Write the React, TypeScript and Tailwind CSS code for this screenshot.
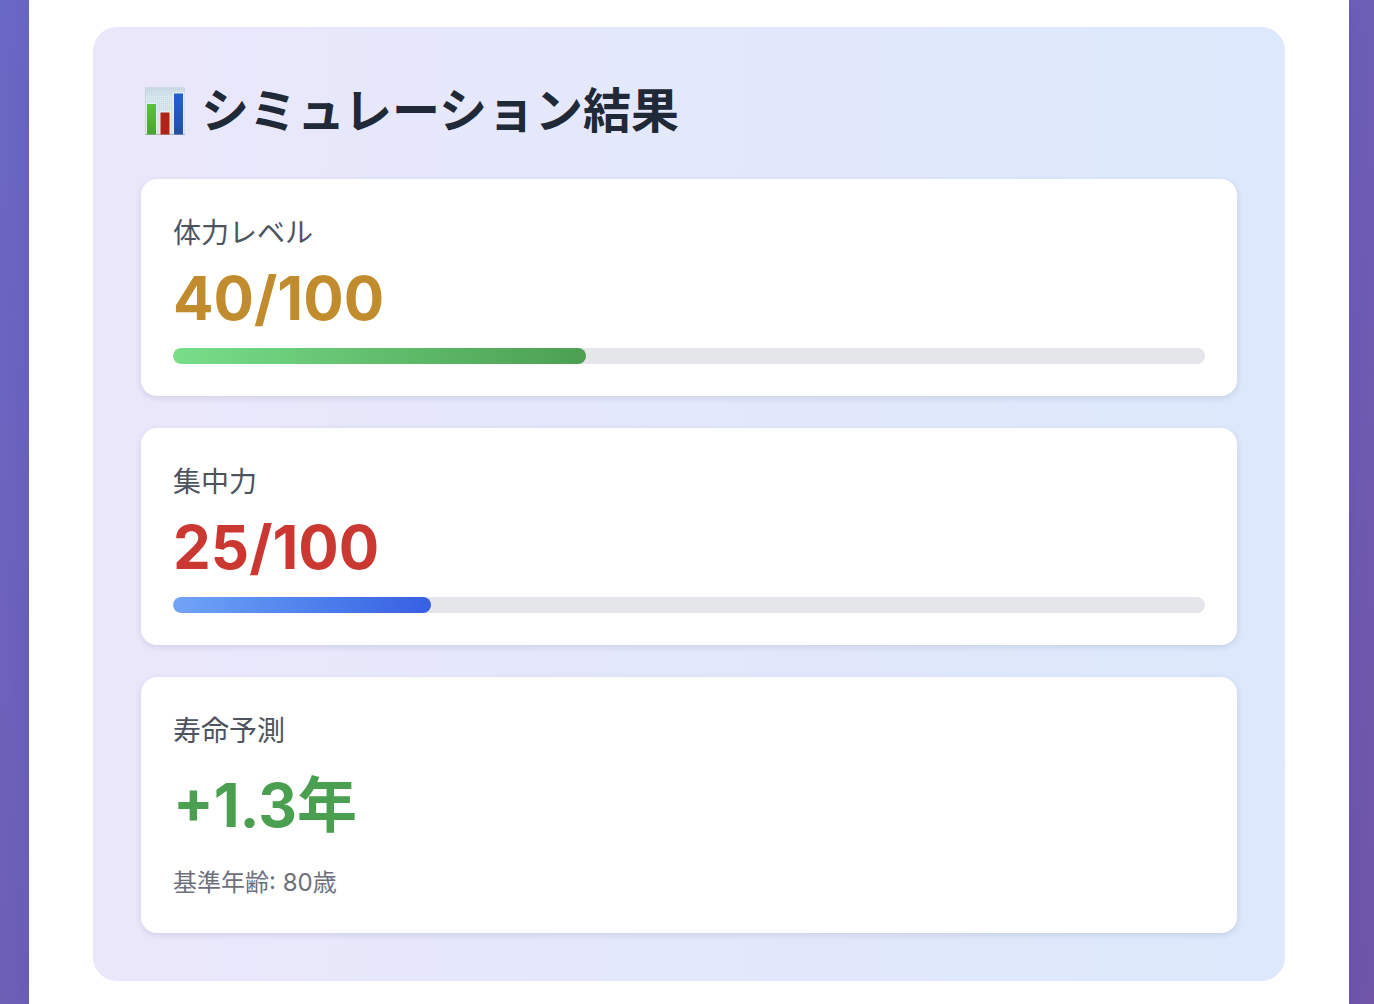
import React from "react";
import clsx from "clsx";

interface StatCardProps {
  label: string;
  value: string;
  valueClass: string;
  percent?: number;
  barClass?: string;
  note?: string;
}

const ChartIcon: React.FC = () => (
  <svg viewBox="0 0 48 48" className="w-12 h-12 shrink-0" aria-hidden="true">
    <defs>
      <linearGradient id="paper" x1="0" y1="0" x2="0" y2="1">
        <stop offset="0" stopColor="#d0dce5" />
        <stop offset="0.2" stopColor="#dfecf2" />
        <stop offset="1" stopColor="#e0eaf1" />
      </linearGradient>
      <linearGradient id="green" x1="0" y1="0" x2="0" y2="1">
        <stop offset="0" stopColor="#59c43b" />
        <stop offset="1" stopColor="#4ba42e" />
      </linearGradient>
      <linearGradient id="blue" x1="0" y1="0" x2="0" y2="1">
        <stop offset="0" stopColor="#2260d0" />
        <stop offset="1" stopColor="#214fa7" />
      </linearGradient>
      <pattern id="grid" width="2" height="2" patternUnits="userSpaceOnUse">
        <path d="M0 0.5H2M0.5 0V2" stroke="#b9d0da" strokeWidth="0.3" />
      </pattern>
    </defs>
    <rect x="4" y="0.5" width="40" height="47.5" fill="url(#paper)" />
    <rect x="4" y="0.5" width="40" height="47.5" fill="url(#grid)" />
    <path d="M4.5 48V1H43.5V48" fill="none" stroke="#c9d3dd" />
    <path d="M5 16H16V48H5ZM18.5 24H30V48H18.5ZM32 5H43.5V48H32Z" fill="#e4edf1" />
    <path d="M4 47.5H44" stroke="#aab7bd" />
    <rect x="6" y="17" width="9" height="30.5" fill="url(#green)" />
    <rect x="19.5" y="25.5" width="9" height="22" fill="#b02318" />
    <rect x="33" y="6.5" width="9" height="41" fill="url(#blue)" />
  </svg>
);

const StatCard: React.FC<StatCardProps> = ({
  label,
  value,
  valueClass,
  percent,
  barClass,
  note,
}) => {
  return (
    <div className="bg-white rounded-2xl p-8 shadow-[0_2px_6px_rgba(30,40,70,0.12)]">
      <div className="text-[28px] leading-[45px] text-[#4d535f] mb-1">{label}</div>
      <div className={clsx("text-[60px] font-bold", valueClass)}>{value}</div>
      {percent !== undefined && (
        <div
          role="progressbar"
          aria-label={label}
          aria-valuenow={percent}
          aria-valuemin={0}
          aria-valuemax={100}
          className="mt-3 h-4 rounded-full bg-[#e5e6ea] overflow-hidden"
        >
          <div
            className={clsx("h-full rounded-full", barClass)}
            style={{ width: `${percent}%` }}
          />
        </div>
      )}
      {note && (
        <div className="mt-3 text-2xl leading-9 text-[#6d707c]">{note}</div>
      )}
    </div>
  );
};

const stats: StatCardProps[] = [
  {
    label: "体力レベル",
    value: "40/100",
    valueClass: "leading-[76px] text-[#c18c2d]",
    percent: 40,
    barClass: "bg-linear-to-r from-[#78de8a] to-[#4c9f52]",
  },
  {
    label: "集中力",
    value: "25/100",
    valueClass: "leading-[76px] text-[#cb3832]",
    percent: 25,
    barClass: "bg-linear-to-r from-[#71a4f7] to-[#365fe2]",
  },
  {
    label: "寿命予測",
    value: "+1.3年",
    valueClass: "leading-[95px] text-[#4a9f50]",
    note: "基準年齢: 80歳",
  },
];

const App: React.FC = () => {
  return (
    <div
      lang="ja"
      className="min-h-screen flex pl-[29px] pr-[25px] bg-linear-to-br from-[#6b69c6] to-[#7156a8] font-['Inter','Noto_Sans_CJK_JP',sans-serif]"
    >
      <main className="flex-1 bg-white px-16 pt-[27px] pb-[23px] shadow-[0_0_30px_rgba(60,60,160,0.2)]">
        <section className="rounded-3xl p-12 bg-linear-to-r from-[#ebe7fb] via-[#e3e8fb] to-[#dce8fb]">
          <h2 className="flex items-center gap-3 mb-8 text-5xl leading-[72px] font-bold text-[#1f2937]">
            <ChartIcon />
            シミュレーション結果
          </h2>
          <div className="flex flex-col gap-8">
            {stats.map((stat) => (
              <StatCard key={stat.label} {...stat} />
            ))}
          </div>
        </section>
      </main>
    </div>
  );
};

export default App;
